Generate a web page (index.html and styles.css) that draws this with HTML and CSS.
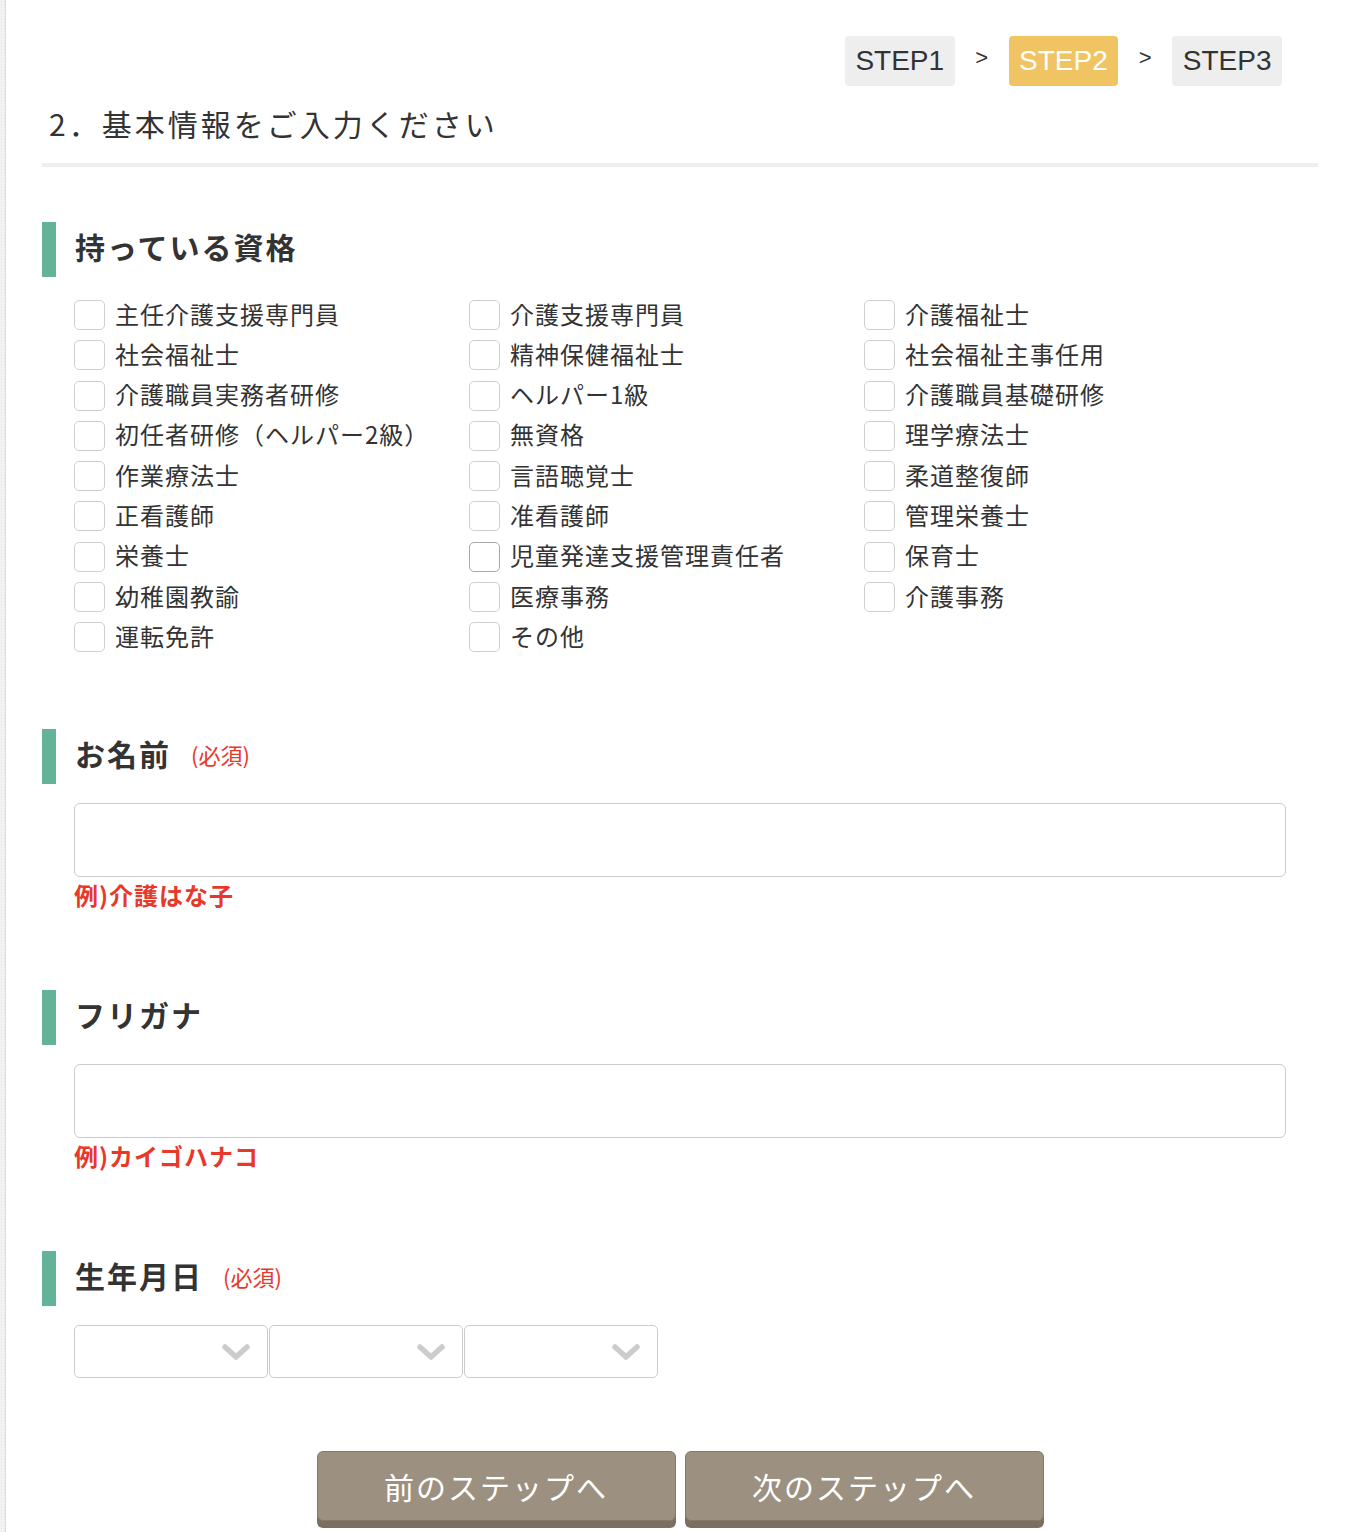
FILE: index.html
```html
<!DOCTYPE html>
<html lang="ja">
<head>
<meta charset="utf-8">
<title>基本情報入力</title>
<link rel="stylesheet" href="styles.css">
</head>
<body>
<div class="page">
  <div class="rail"></div>
  <main class="main">
    <ol class="steps">
      <li class="step">STEP1</li>
      <li class="sep">&gt;</li>
      <li class="step current">STEP2</li>
      <li class="sep">&gt;</li>
      <li class="step">STEP3</li>
    </ol>
    <h1 class="title">2．基本情報をご入力ください</h1>

    <section class="block block-quals">
      <h2 class="head"><span>持っている資格</span></h2>
      <div class="checks">
        <label class="check"><span class="box"></span><span class="txt">主任介護支援専門員</span></label>
        <label class="check"><span class="box"></span><span class="txt">介護支援専門員</span></label>
        <label class="check"><span class="box"></span><span class="txt">介護福祉士</span></label>
        <label class="check"><span class="box"></span><span class="txt">社会福祉士</span></label>
        <label class="check"><span class="box"></span><span class="txt">精神保健福祉士</span></label>
        <label class="check"><span class="box"></span><span class="txt">社会福祉主事任用</span></label>
        <label class="check"><span class="box"></span><span class="txt">介護職員実務者研修</span></label>
        <label class="check"><span class="box"></span><span class="txt">ヘルパー1級</span></label>
        <label class="check"><span class="box"></span><span class="txt">介護職員基礎研修</span></label>
        <label class="check"><span class="box"></span><span class="txt">初任者研修（ヘルパー2級）</span></label>
        <label class="check"><span class="box"></span><span class="txt">無資格</span></label>
        <label class="check"><span class="box"></span><span class="txt">理学療法士</span></label>
        <label class="check"><span class="box"></span><span class="txt">作業療法士</span></label>
        <label class="check"><span class="box"></span><span class="txt">言語聴覚士</span></label>
        <label class="check"><span class="box"></span><span class="txt">柔道整復師</span></label>
        <label class="check"><span class="box"></span><span class="txt">正看護師</span></label>
        <label class="check"><span class="box"></span><span class="txt">准看護師</span></label>
        <label class="check"><span class="box"></span><span class="txt">管理栄養士</span></label>
        <label class="check"><span class="box"></span><span class="txt">栄養士</span></label>
        <label class="check"><span class="box hover"></span><span class="txt">児童発達支援管理責任者</span></label>
        <label class="check"><span class="box"></span><span class="txt">保育士</span></label>
        <label class="check"><span class="box"></span><span class="txt">幼稚園教諭</span></label>
        <label class="check"><span class="box"></span><span class="txt">医療事務</span></label>
        <label class="check"><span class="box"></span><span class="txt">介護事務</span></label>
        <label class="check"><span class="box"></span><span class="txt">運転免許</span></label>
        <label class="check"><span class="box"></span><span class="txt">その他</span></label>
      </div>
    </section>

    <section class="block block-name">
      <h2 class="head"><span>お名前</span><em class="req">(必須)</em></h2>
      <div class="field"></div>
      <p class="example">例)介護はな子</p>
    </section>

    <section class="block">
      <h2 class="head"><span>フリガナ</span></h2>
      <div class="field"></div>
      <p class="example">例)カイゴハナコ</p>
    </section>

    <section class="block">
      <h2 class="head"><span>生年月日</span><em class="req">(必須)</em></h2>
      <div class="selects">
        <div class="select"><svg class="chev" viewBox="0 0 30 18" width="30" height="18"><polyline points="4,4 15,14 26,4"/></svg></div>
        <div class="select"><svg class="chev" viewBox="0 0 30 18" width="30" height="18"><polyline points="4,4 15,14 26,4"/></svg></div>
        <div class="select"><svg class="chev" viewBox="0 0 30 18" width="30" height="18"><polyline points="4,4 15,14 26,4"/></svg></div>
      </div>
    </section>

    <div class="buttons">
      <button class="btn" type="button">前のステップへ</button>
      <button class="btn" type="button">次のステップへ</button>
    </div>
  </main>
</div>
</body>
</html>
```

FILE: styles.css
```css
html, body {
  margin: 0;
  padding: 0;
  background: #fff;
}
body {
  font-family: "Noto Sans CJK JP", "Noto Sans", sans-serif;
  color: #333;
}
.page {
  display: flex;
  min-height: 1532px;
}
.rail {
  width: 5px;
  flex: none;
  background-color: #f2f2f2;
  background-image: radial-gradient(#e2e2e2 0.8px, transparent 1px);
  background-size: 3px 3px;
  border-right: 1px solid #dcdcdc;
}
.main {
  width: 1276px;
  margin-left: 36px;
  display: flex;
  flex-direction: column;
}
.steps {
  list-style: none;
  margin: 36px 36px 0 0;
  padding: 0;
  display: flex;
  justify-content: flex-end;
  align-items: center;
}
.step {
  font-family: "Liberation Sans", Arial, sans-serif;
  font-size: 28px;
  line-height: 50px;
  height: 50px;
  padding: 0 10.5px;
  background: #eeeeee;
  border-radius: 4px;
  color: #333;
}
.step.current {
  background: #f0c462;
  color: #fff;
}
.sep {
  font-family: "Liberation Sans", Arial, sans-serif;
  font-size: 22px;
  width: 54px;
  text-align: center;
  color: #333;
  margin-top: -6px;
}
.title {
  margin: 17px 0 0;
  padding: 0 0 20px 7px;
  font-size: 30px;
  line-height: 40px;
  font-weight: 400;
  letter-spacing: 3px;
  color: #333;
  border-bottom: 4px solid #eeeeee;
}
.block {
  margin-top: 55px;
}
.block + .block {
  margin-top: 80px;
}
.block.block-name {
  margin-top: 77px;
}
.head {
  margin: 0;
  height: 55px;
  box-sizing: border-box;
  padding-bottom: 8px;
  display: flex;
  align-items: center;
  border-left: 14px solid #62b398;
  padding-left: 19px;
  font-size: 30px;
  font-weight: 700;
  letter-spacing: 2px;
  color: #333;
}
.req {
  font-style: normal;
  font-weight: 400;
  font-size: 22px;
  letter-spacing: 0;
  color: #e8382a;
  margin-left: 20px;
  margin-top: 3px;
}
.checks {
  margin: 23px 0 0 32px;
  display: grid;
  grid-template-columns: repeat(3, 395px);
  row-gap: 10.3px;
}
.check {
  display: flex;
  align-items: center;
  height: 30px;
  font-size: 24px;
  letter-spacing: 1px;
  color: #333;
}
.txt {
  padding-bottom: 4px;
}
.box {
  width: 29px;
  height: 28px;
  border: 1px solid #cfcfcf;
  border-radius: 5px;
  margin-right: 10px;
  flex: none;
  background: #fff;
}
.box.hover {
  border-color: #a8a8a8;
}
.field {
  margin: 19px 0 0 32px;
  width: 1212px;
  height: 74px;
  box-sizing: border-box;
  border: 1px solid #cccccc;
  border-radius: 6px;
  background: #fff;
}
.example {
  margin: 3px 0 0 32px;
  font-size: 24px;
  line-height: 30px;
  font-weight: 700;
  letter-spacing: 1px;
  color: #e8382a;
}
.selects {
  margin: 19px 0 0 32px;
  display: flex;
  gap: 1px;
}
.select {
  width: 194px;
  height: 53px;
  box-sizing: border-box;
  border: 1px solid #cccccc;
  border-radius: 5px;
  display: flex;
  align-items: center;
  justify-content: flex-end;
  padding-right: 16px;
}
.chev polyline {
  fill: none;
  stroke: #cccccc;
  stroke-width: 5.5;
  stroke-linecap: round;
  stroke-linejoin: round;
}
.buttons {
  margin-top: 73px;
  display: flex;
  justify-content: center;
  gap: 9px;
}
.btn {
  width: 359px;
  height: 70px;
  background: #9c9080;
  border: 1px solid #85796a;
  border-radius: 6px;
  box-shadow: 0 7px 0 #7a6f61;
  color: #fff;
  font-family: "Noto Sans CJK JP", sans-serif;
  font-size: 30px;
  letter-spacing: 2px;
  padding: 0;
}
```
